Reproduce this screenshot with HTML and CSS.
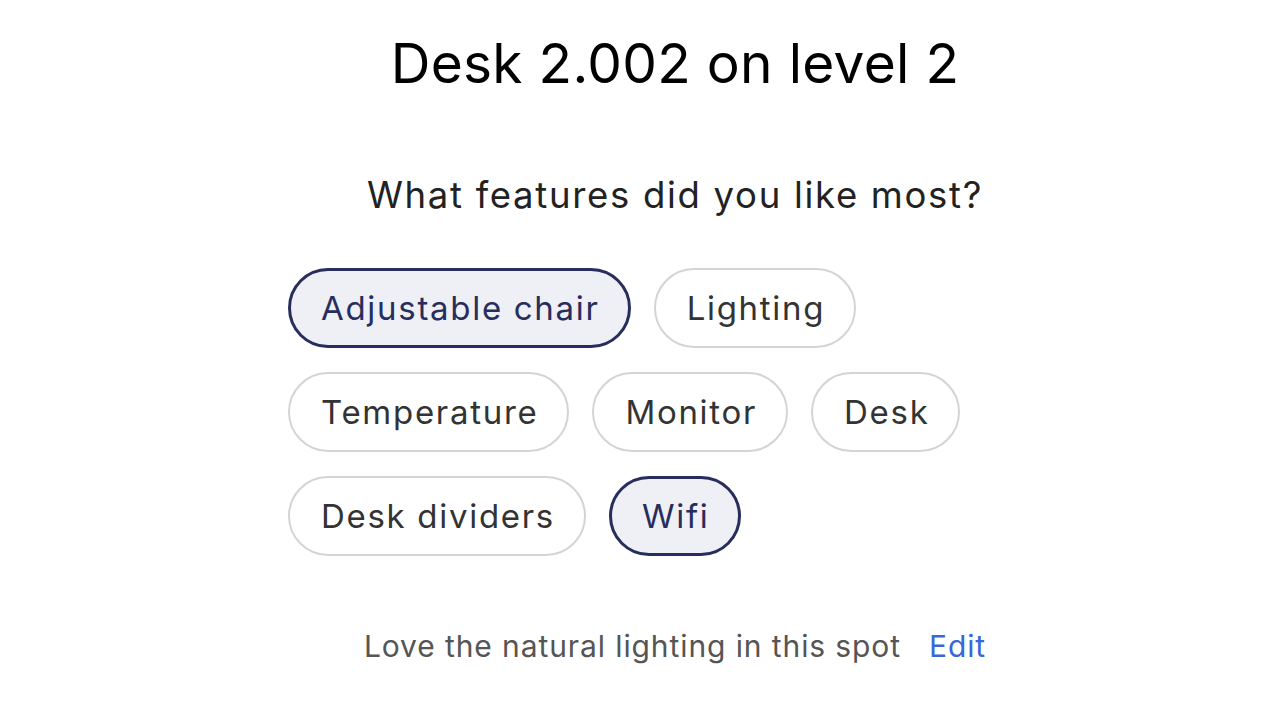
FILE: index.html
```html
<!DOCTYPE html>
<html>
<head>
<meta charset="utf-8">
<link rel="stylesheet" href="styles.css">
</head>
<body>
<main class="panel">
  <h1 class="title">Desk 2.002 on level 2</h1>
  <h2 class="question">What features did you like most?</h2>
  <div class="chips">
    <span class="chip selected">Adjustable chair</span>
    <span class="chip">Lighting</span>
    <span class="chip">Temperature</span>
    <span class="chip">Monitor</span>
    <span class="chip">Desk</span>
    <span class="chip">Desk dividers</span>
    <span class="chip selected">Wifi</span>
  </div>
  <p class="comment"><span class="comment-text">Love the natural lighting in this spot</span><a class="edit" href="#">Edit</a></p>
</main>
</body>
</html>
```
FILE: styles.css
```css
html, body {
  margin: 0;
  padding: 0;
  background: #ffffff;
}
body {
  font-family: Inter, "Noto Sans", sans-serif;
  width: 1280px;
  height: 720px;
  overflow: hidden;
}
.panel {
  width: 774px;
  margin-left: 288px;
  display: flex;
  flex-direction: column;
}
.title {
  margin: 30px 0 0;
  font-size: 55px;
  font-weight: 400;
  line-height: 66px;
  letter-spacing: 0.3px;
  color: #000;
  text-align: center;
}
.question {
  margin: 76px 0 0;
  font-size: 36.5px;
  font-weight: 400;
  line-height: 46px;
  letter-spacing: 1.7px;
  color: #222;
  text-align: center;
}
.chips {
  margin-top: 50px;
  display: flex;
  flex-wrap: wrap;
  gap: 24px 23px;
  max-width: 700px;
}
.chip {
  box-sizing: border-box;
  height: 80px;
  padding: 0 29px 0 31px;
  border: 2px solid #d4d4d4;
  border-radius: 40px;
  display: flex;
  align-items: center;
  font-size: 33px;
  letter-spacing: 1.7px;
  color: #333;
  background: #fff;
}
.chip.selected {
  padding: 0 28px 0 30px;
  border: 3px solid #272d5c;
  background: #efeff6;
  color: #272d5c;
}
.comment {
  margin: 70px 0 0;
  display: flex;
  justify-content: center;
  align-items: baseline;
  gap: 28px;
  font-size: 30px;
  line-height: 40px;
  letter-spacing: 0.9px;
}
.comment-text {
  color: #555;
}
.edit {
  color: #3a67d8;
  text-decoration: none;
}
```
